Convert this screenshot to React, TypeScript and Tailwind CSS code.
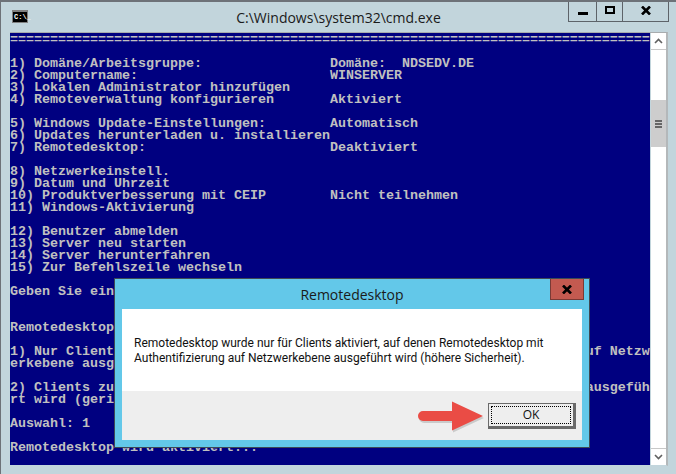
const lines = [
  "================================================================================",
  "",
  "1) Domäne/Arbeitsgruppe:                Domäne:  NDSEDV.DE",
  "2) Computername:                        WINSERVER",
  "3) Lokalen Administrator hinzufügen",
  "4) Remoteverwaltung konfigurieren       Aktiviert",
  "",
  "5) Windows Update-Einstellungen:        Automatisch",
  "6) Updates herunterladen u. installieren",
  "7) Remotedesktop:                       Deaktiviert",
  "",
  "8) Netzwerkeinstell.",
  "9) Datum und Uhrzeit",
  "10) Produktverbesserung mit CEIP        Nicht teilnehmen",
  "11) Windows-Aktivierung",
  "",
  "12) Benutzer abmelden",
  "13) Server neu starten",
  "14) Server herunterfahren",
  "15) Zur Befehlszeile wechseln",
  "",
  "Geben Sie eine Zahl ein, um eine Option auszuwählen: 7",
  "",
  "",
  "Remotedesktop aktivieren",
  "",
  "1) Nur Clients zulassen, auf denen Remotedesktop mit Authentifizierung auf Netzw",
  "erkebene ausgeführt wird (höhere Sicherheit)",
  "",
  "2) Clients zulassen, auf denen eine beliebige Version von Remotedesktop ausgefüh",
  "rt wird (geringere Sicherheit)",
  "",
  "Auswahl: 1",
  "",
  "Remotedesktop wird aktiviert...",
];

function CloseGlyph() {
  return (
    <svg width="10" height="9" viewBox="0 0 10 9" fill="none" stroke="#000" strokeWidth="2.6">
      <path d="M1 0.5L9 8.5M9 0.5L1 8.5" />
    </svg>
  );
}

export default function App() {
  return (
    <div className="relative flex h-[474px] w-[676px] flex-col overflow-hidden border-l border-t-2 border-[#6d7278] bg-[#c2d5dc] font-['Open_Sans',sans-serif]">
      {/* title bar */}
      <div className="relative flex h-[30px] shrink-0 items-center justify-center">
        <div className="absolute left-[11px] top-[8px] flex h-[13px] w-[16px] items-center border-x border-b border-t-2 border-[#808080] bg-black pl-[1px] font-['Liberation_Mono',monospace] text-[7px] font-bold leading-none text-white">
          C:\_
        </div>
        <span className="text-[14px] text-[#1a1a1a]">C:\Windows\system32\cmd.exe</span>
        <div className="absolute right-[7px] top-[-2px] flex h-[22px] border-x border-b border-[#5d6369]">
          <div className="flex w-[28px] items-center justify-center border-r border-[#5d6369]">
            <div className="mt-[5px] h-[3px] w-[10px] bg-black" />
          </div>
          <div className="flex w-[26px] items-center justify-center border-r border-[#5d6369]">
            <div className="mb-[1px] h-[8px] w-[10px] border-2 border-black" />
          </div>
          <div className="flex w-[45px] items-center justify-center">
            <CloseGlyph />
          </div>
        </div>
      </div>

      {/* console + scrollbar */}
      <div className="ml-[9px] flex h-[434px] w-[658px] shrink-0 border-r-2 border-t border-b border-r-[#b4b8ba] border-t-[#a8acae] border-b-[#c2d5dc]">
        <pre className="h-[432px] w-[640px] shrink-0 overflow-hidden bg-[#000080] pt-[1px] font-['Liberation_Mono',monospace] text-[13.33px] font-bold leading-[12px] text-[#c0c0c0]">
          {lines.map((l, i) => (
            <div key={i} className="h-[12px] whitespace-pre">
              {l}
            </div>
          ))}
        </pre>
        <div className="ml-[1px] flex h-[432px] w-[15px] flex-col bg-white">
          <div className="flex h-[17px] items-center justify-center border-b border-[#c8c8c8]">
            <svg width="9" height="6" viewBox="0 0 9 6" fill="none" stroke="#606060" strokeWidth="1.6">
              <path d="M1 5l3.5-3.5L8 5" />
            </svg>
          </div>
          <div className="mt-[50px] flex h-[47px] flex-col items-center justify-center gap-[1px] bg-[#cdcdcd]">
            <div className="h-[2px] w-[7px] bg-[#666]" />
            <div className="h-[2px] w-[7px] bg-[#666]" />
            <div className="h-[2px] w-[7px] bg-[#666]" />
          </div>
          <div className="flex-1" />
          <div className="flex h-[17px] items-center justify-center border-t border-[#c8c8c8]">
            <svg width="9" height="6" viewBox="0 0 9 6" fill="none" stroke="#606060" strokeWidth="1.6">
              <path d="M1 1l3.5 3.5L8 1" />
            </svg>
          </div>
        </div>
      </div>

      {/* dialog */}
      <div className="absolute left-[113px] top-[276px] flex h-[170px] w-[476px] flex-col border border-[#3d4a55] bg-[#63c8e9] px-[7px] pb-[7px]">
        <div className="relative flex h-[30px] shrink-0 items-center justify-center">
          <span className="text-[14px] text-[#1a1a1a]">Remotedesktop</span>
          <div className="absolute right-[-2px] top-0 flex h-[21px] w-[34px] items-center justify-center border border-t-0 border-[#7a3a35] bg-[#c35a50]">
            <CloseGlyph />
          </div>
        </div>
        <div className="flex h-[82px] shrink-0 items-start bg-white pl-[12px] pt-[27px]">
          <p className="font-['Roboto',sans-serif] text-[12px] leading-[15px] text-[#111]">
            Remotedesktop wurde nur für Clients aktiviert, auf denen Remotedesktop mit
            <br />
            Authentifizierung auf Netzwerkebene ausgeführt wird (höhere Sicherheit).
          </p>
        </div>
        <div className="relative flex flex-1 items-start justify-end bg-[#eeeeee] pr-[6px] pt-[12px]">
          <button className="flex h-[26px] w-[88px] items-center justify-center border border-b-[3px] border-r-[3px] border-[#6a6a6a] bg-[#eeeeee] p-[2px] text-[12px] text-[#111]">
            <span className="flex h-full w-full items-center justify-center border border-dotted border-black">OK</span>
          </button>
          <svg className="absolute left-[295px] top-[10px]" width="68" height="34" viewBox="0 0 68 34">
            <path d="M6 10H35V0.5L66 15L35 29.5V20H6a5 5 0 0 1 0-10z" fill="#000" opacity="0.15" transform="translate(1 2)" />
            <path d="M6 10H35V0.5L66 15L35 29.5V20H6a5 5 0 0 1 0-10z" fill="#ea4c45" />
          </svg>
        </div>
      </div>
    </div>
  );
}
